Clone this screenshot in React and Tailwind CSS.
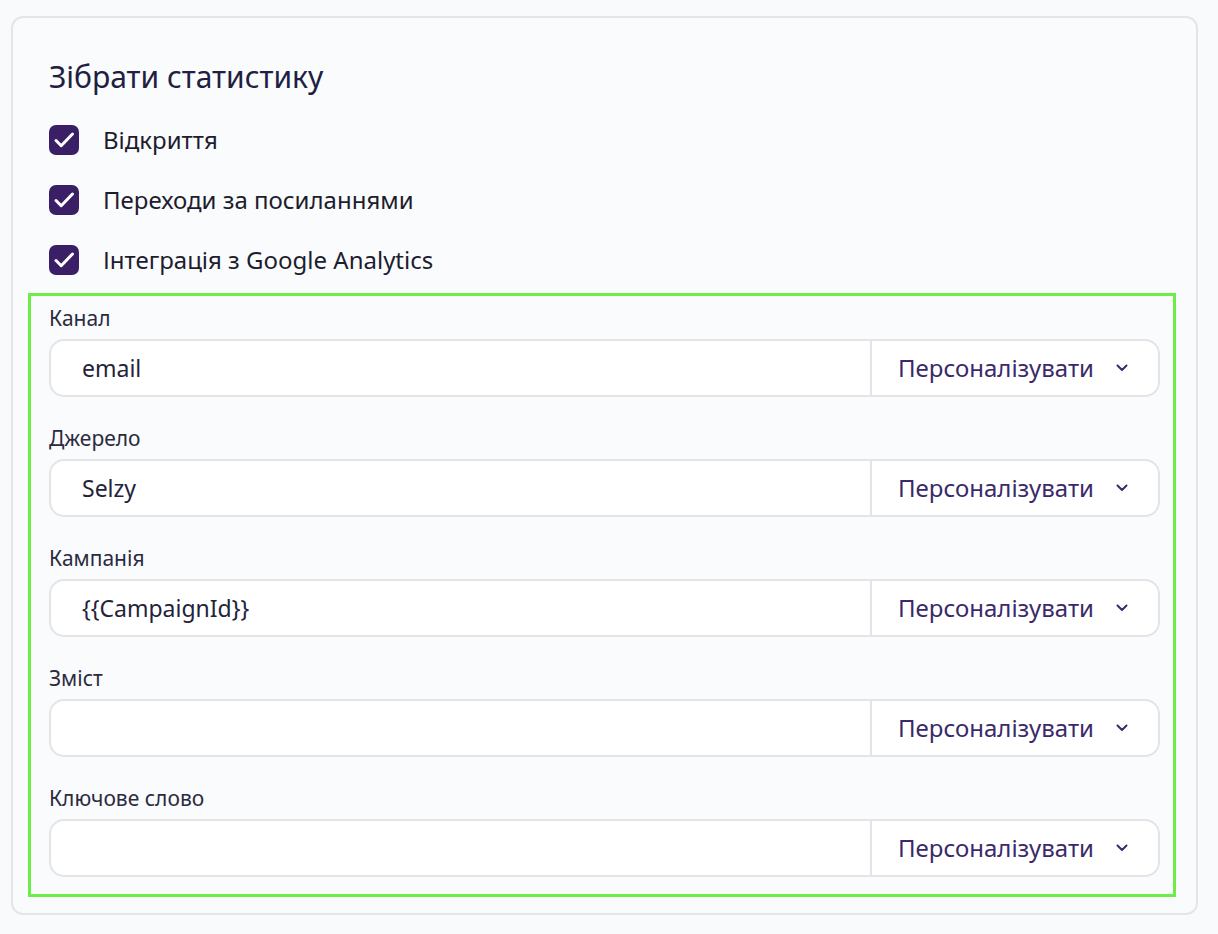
import React from "react";

const fields = [
  { label: "Канал", value: "email" },
  { label: "Джерело", value: "Selzy" },
  { label: "Кампанія", value: "{{CampaignId}}" },
  { label: "Зміст", value: "" },
  { label: "Ключове слово", value: "" },
];

const options = ["Відкриття", "Переходи за посиланнями", "Інтеграція з Google Analytics"];

const Check = () => (
  <span className="w-[30px] h-[30px] rounded-[7px] bg-[#3b1f66] shrink-0">
    <svg width="30" height="30" viewBox="0 0 30 30" fill="none">
      <path d="M7 15.5l5.2 5.2L23.5 9" stroke="white" strokeWidth="3" strokeLinecap="round" strokeLinejoin="round" />
    </svg>
  </span>
);

const Chevron = () => (
  <svg width="12" height="8" viewBox="0 0 12 8" fill="none">
    <path d="M1.5 1.5L6 6l4.5-4.5" stroke="#3b2a6a" strokeWidth="2" strokeLinecap="round" strokeLinejoin="round" />
  </svg>
);

export default function App() {
  return (
    <div className="min-h-screen bg-[#f9fafc] pt-4 pl-[11px] pr-5 pb-5 font-['Noto_Sans',sans-serif]">
      <div className="border-2 border-[#e4e5ea] rounded-[12px] bg-[#fafbfd] px-9 pt-[42px] pb-4">
        {/* TITLE */}
        <h2 className="text-[30px] leading-[34px] text-[#1f2041]">Зібрати статистику</h2>

        {/* CHECKBOXES */}
        <div className="mt-[31px] flex flex-col gap-[30px]">
          {options.map((o) => (
            <label key={o} className="flex items-center gap-6 h-[30px]">
              <Check />
              <span className="text-[24px] text-[#1d1d2e]">{o}</span>
            </label>
          ))}
        </div>

        {/* UTM FIELDS */}
        <div className="mt-[18px] -ml-[21px] -mr-4 border-[3px] border-[#6ded48] pl-[18px] pr-[13px] pt-[10px] pb-[17px] flex flex-col gap-[29px]">
          {fields.map((f) => (
            <div key={f.label}>
              <div className="text-[21px] leading-[24px] text-[#2b2b3d]">{f.label}</div>
              <div className="mt-[9px] h-[58px] flex border-2 border-[#e3e4e8] rounded-[15px] bg-white">
                <div className="flex-1 flex items-center pl-[31px] text-[23px] text-[#23233a]">{f.value}</div>
                <div className="w-[2px] bg-[#e3e4e8]" />
                <button className="w-[286px] flex items-center pl-[26px] gap-[22px] text-[24px] text-[#3b2a6a]">
                  Персоналізувати
                  <Chevron />
                </button>
              </div>
            </div>
          ))}
        </div>
      </div>
    </div>
  );
}
